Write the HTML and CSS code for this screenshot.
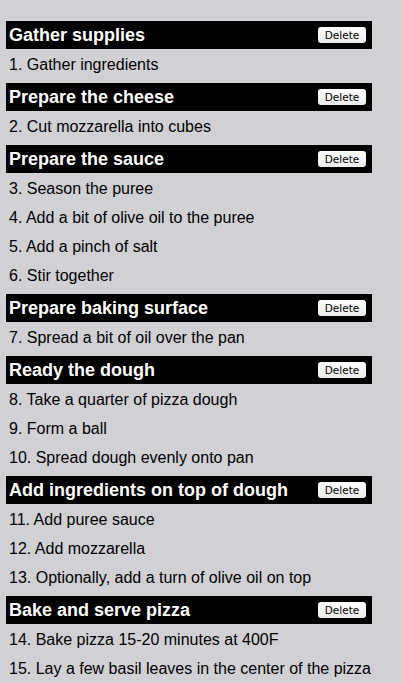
FILE: index.html
```html
<!DOCTYPE html>
<html>
<head>
<meta charset="utf-8">
<link rel="stylesheet" href="styles.css">
</head>
<body>
<div class="recipe">
  <section class="group">
    <div class="bar"><span class="title">Gather supplies</span><button class="del">Delete</button></div>
    <ul class="steps">
      <li>1. Gather ingredients</li>
    </ul>
  </section>
  <section class="group">
    <div class="bar"><span class="title">Prepare the cheese</span><button class="del">Delete</button></div>
    <ul class="steps">
      <li>2. Cut mozzarella into cubes</li>
    </ul>
  </section>
  <section class="group">
    <div class="bar"><span class="title">Prepare the sauce</span><button class="del">Delete</button></div>
    <ul class="steps">
      <li>3. Season the puree</li>
      <li>4. Add a bit of olive oil to the puree</li>
      <li>5. Add a pinch of salt</li>
      <li>6. Stir together</li>
    </ul>
  </section>
  <section class="group">
    <div class="bar"><span class="title">Prepare baking surface</span><button class="del">Delete</button></div>
    <ul class="steps">
      <li>7. Spread a bit of oil over the pan</li>
    </ul>
  </section>
  <section class="group">
    <div class="bar"><span class="title">Ready the dough</span><button class="del">Delete</button></div>
    <ul class="steps">
      <li>8. Take a quarter of pizza dough</li>
      <li>9. Form a ball</li>
      <li>10. Spread dough evenly onto pan</li>
    </ul>
  </section>
  <section class="group">
    <div class="bar"><span class="title">Add ingredients on top of dough</span><button class="del">Delete</button></div>
    <ul class="steps">
      <li>11. Add puree sauce</li>
      <li>12. Add mozzarella</li>
      <li>13. Optionally, add a turn of olive oil on top</li>
    </ul>
  </section>
  <section class="group">
    <div class="bar"><span class="title">Bake and serve pizza</span><button class="del">Delete</button></div>
    <ul class="steps">
      <li>14. Bake pizza 15-20 minutes at 400F</li>
      <li>15. Lay a few basil leaves in the center of the pizza</li>
    </ul>
  </section>
</div>
</body>
</html>
```
FILE: styles.css
```css
html, body {
  margin: 0;
  padding: 0;
  background: #d1d0d5;
  height: 100%;
  overflow: hidden;
}
body {
  font-family: "Liberation Sans", Arial, sans-serif;
  color: #000;
}
.recipe {
  padding: 21px 0 0 6px;
  width: 366px;
}
.group {
  margin-bottom: 5px;
}
.bar {
  background: #000;
  height: 28px;
  display: flex;
  align-items: center;
  justify-content: space-between;
  padding: 0 6px 0 3px;
}
.title {
  color: #fff;
  font-weight: bold;
  font-size: 18px;
  line-height: 28px;
}
.del {
  width: 48px;
  height: 16px;
  padding: 0;
  border: none;
  border-radius: 3px;
  background: linear-gradient(#ffffff, #ececec);
  font-family: "DejaVu Sans", "Liberation Sans", sans-serif;
  font-size: 10.5px;
  color: #000;
  line-height: 16px;
}
.steps {
  list-style: none;
  margin: 0;
  padding: 0 0 0 3px;
}
.steps li {
  font-size: 16px;
  padding-top: 2px;
  line-height: 27px;
  height: 27px;
  white-space: nowrap;
}
```
